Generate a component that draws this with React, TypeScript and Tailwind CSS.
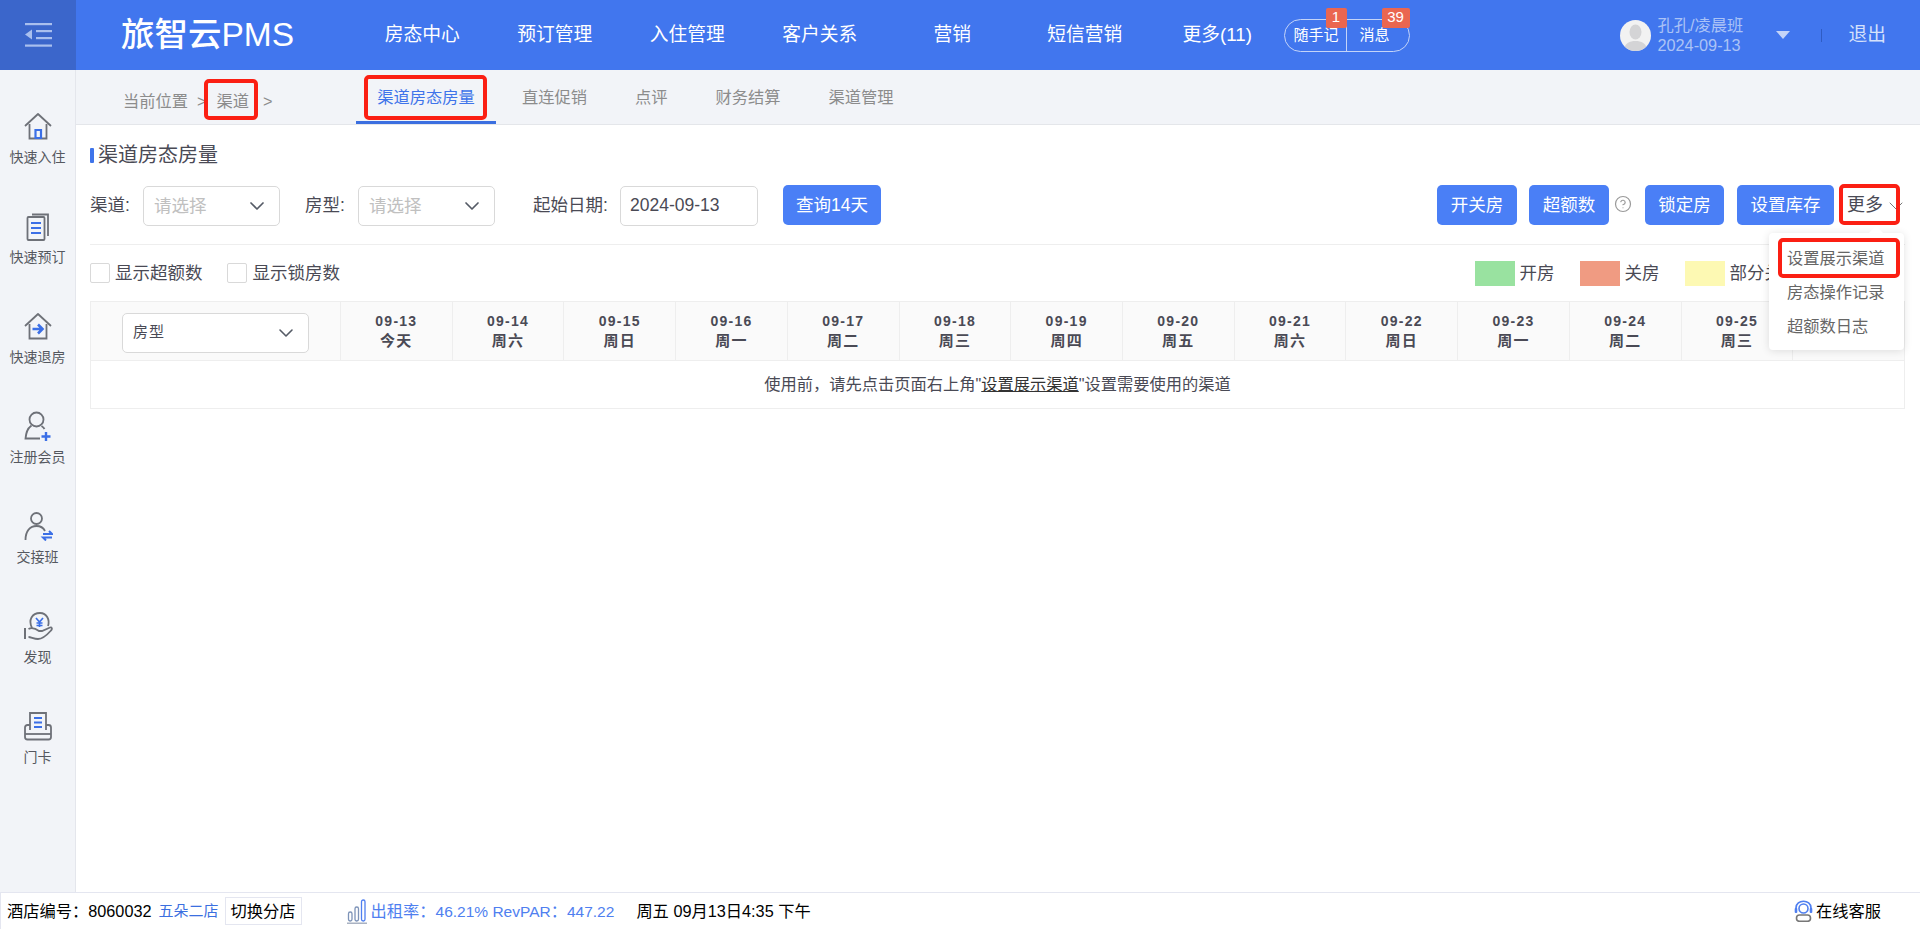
import {ChevronDown, CircleHelp} from "lucide-react";

const navItems = ["房态中心", "预订管理", "入住管理", "客户关系", "营销", "短信营销", "更多(11)"];
const dates = [
    ["09-13", "今天"], ["09-14", "周六"], ["09-15", "周日"], ["09-16", "周一"], ["09-17", "周二"],
    ["09-18", "周三"], ["09-19", "周四"], ["09-20", "周五"], ["09-21", "周六"], ["09-22", "周日"],
    ["09-23", "周一"], ["09-24", "周二"], ["09-25", "周三"],
];

const GRAY = "#6e7178";
const BLUE = "#3b6fe6";

const IconCheckin = () => (
    <svg width="30" height="30" viewBox="0 0 30 30" fill="none" strokeWidth="1.8">
        <path d="M2 15 L15 3 L28 15" stroke={GRAY} strokeLinejoin="round"/>
        <path d="M6.5 13 V27.5 H23.5 V13" stroke={GRAY}/>
        <path d="M12.5 27 V19 H18 V27 Z" stroke={BLUE} strokeWidth="2.2"/>
    </svg>
);
const IconBook = () => (
    <svg width="30" height="30" viewBox="0 0 30 30" fill="none" strokeWidth="1.8">
        <rect x="4.5" y="6" width="17" height="23" rx="1" stroke={GRAY}/>
        <path d="M9 3.5 H25 V25" stroke={GRAY}/>
        <path d="M8 12 H18 M8 17 H18 M8 22 H18" stroke={BLUE} strokeWidth="2"/>
    </svg>
);
const IconCheckout = () => (
    <svg width="30" height="30" viewBox="0 0 30 30" fill="none" strokeWidth="1.8">
        <path d="M2 15 L15 3 L28 15" stroke={GRAY} strokeLinejoin="round"/>
        <path d="M6.5 13 V27.5 H23.5 V13" stroke={GRAY}/>
        <path d="M9.5 18 H19 M15 13.5 L19.5 18 L15 22.5" stroke={BLUE} strokeWidth="2.6"/>
    </svg>
);
const IconMember = () => (
    <svg width="30" height="30" viewBox="0 0 30 30" fill="none" strokeWidth="1.8">
        <circle cx="13.5" cy="8.5" r="7" stroke={GRAY}/>
        <path d="M8.5 14.5 C3.5 18 3 23 2.5 27.5 H17" stroke={GRAY}/>
        <path d="M18.5 15 C20 16 21 17 21.5 18" stroke={GRAY}/>
        <path d="M23 21 V30 M18.5 25.5 H27.5" stroke={BLUE} strokeWidth="2.4"/>
    </svg>
);
const IconShift = () => (
    <svg width="30" height="30" viewBox="0 0 30 30" fill="none" strokeWidth="1.8">
        <circle cx="13.5" cy="7.5" r="5.5" stroke={GRAY}/>
        <path d="M2.5 29 C2.5 20 7 15 13.5 15 C17.5 15 20.5 17 22 20" stroke={GRAY}/>
        <path d="M20 23 H29 L26 20 M29 26.5 H20 L23 29.5" stroke={BLUE} strokeWidth="2"/>
    </svg>
);
const IconFind = () => (
    <svg width="30" height="30" viewBox="0 0 30 30" fill="none" strokeWidth="1.8">
        <path d="M9 17 C5 9 9 2 17 2 C24 2 27 9 25 15" stroke={GRAY}/>
        <path d="M13 7 L16.5 11 L20 7 M16.5 11 V16 M13.5 12 H19.5 M13.5 14.5 H19.5" stroke={BLUE} strokeWidth="1.7"/>
        <path d="M2 17 V28" stroke={GRAY} strokeWidth="2"/>
        <path d="M5.5 18 C9 16 12 17 16 20 H19 L27 16.5 C29 16 29.5 18 28 19.5 C24 24 20 28 15 28 C11 28 8 26 5.5 26" stroke={GRAY}/>
    </svg>
);
const IconCard = () => (
    <svg width="30" height="30" viewBox="0 0 30 30" fill="none" strokeWidth="1.8">
        <path d="M7 19 V2 H23 V19" stroke={GRAY}/>
        <path d="M11 7 H19 M11 11.5 H19 M11 16 H19" stroke={BLUE} strokeWidth="2"/>
        <path d="M7 14 H4.5 C3 14 2 15 2 16.5 V26 C2 27.5 3 28.5 4.5 28.5 H25.5 C27 28.5 28 27.5 28 26 V16.5 C28 15 27 14 25.5 14 H23" stroke={GRAY}/>
        <path d="M2 23 H28" stroke={GRAY}/>
    </svg>
);

const sideItems = [
    {label: "快速入住", icon: <IconCheckin/>},
    {label: "快速预订", icon: <IconBook/>},
    {label: "快速退房", icon: <IconCheckout/>},
    {label: "注册会员", icon: <IconMember/>},
    {label: "交接班", icon: <IconShift/>},
    {label: "发现", icon: <IconFind/>},
    {label: "门卡", icon: <IconCard/>},
];

const SelectBox = ({text}: {text: string}) => (
    <div className="mt-[1px] flex h-[40px] w-[137px] items-center justify-between rounded-[5px] border border-[#d9d9d9] bg-white pl-[10px] pr-[10px]">
        <span className="text-[17.5px] text-[#c0c0c0]">{text}</span>
        <ChevronDown size={24} strokeWidth={1.7} color="#555b66"/>
    </div>
);

const BlueButton = ({text, width, className}: {text: string; width: string; className?: string}) => (
    <button className={`flex h-[40px] items-center justify-center rounded-[5px] bg-[#4a7ff6] text-[17.5px] text-white ${width} ${className ?? ""}`}>
        {text}
    </button>
);

const App = () => {
    return (
        <div className="relative flex h-screen flex-col overflow-hidden bg-white text-[#4a4a55] [font-family:'Liberation_Sans','Noto_Sans_CJK_SC',sans-serif]">
            {/* top bar */}
            <div className="flex h-[70px] shrink-0 items-center bg-[#4176ee] text-white">
                <div className="flex h-full w-[76px] items-center justify-center bg-[#3b66cb]">
                    <svg width="27" height="24" viewBox="0 0 27 24" fill="#a9bfee">
                        <rect x="0" y="0" width="27" height="2.2"/>
                        <rect x="11" y="7" width="16" height="2.2"/>
                        <rect x="11" y="14" width="16" height="2.2"/>
                        <rect x="0" y="21.5" width="27" height="2.2"/>
                        <path d="M0 11.5 L7 6.5 V16.5 Z"/>
                    </svg>
                </div>
                <div className="w-[280px] pl-[45px] text-[33.5px] font-medium leading-none">旅智云PMS</div>
                <div className="flex">
                    {navItems.map((item) => (
                        <div key={item} className="w-[132.5px] text-center text-[18.75px]">{item}</div>
                    ))}
                </div>
                <div className="relative flex h-[33px] w-[126px] items-center rounded-full border border-[#c4d4f8] text-[15px]">
                    <div className="flex h-full w-[62px] items-center justify-center border-r border-[#c4d4f8] pl-[2px]">随手记</div>
                    <div className="flex-1 pr-[6px] text-center">消息</div>
                    <span className="absolute left-[41px] top-[-12px] flex h-[20px] w-[21px] items-center justify-center rounded-[2px] bg-[#ea6650] text-[15px]">1</span>
                    <span className="absolute left-[97px] top-[-12px] flex h-[20px] w-[28px] items-center justify-center rounded-[2px] bg-[#ea6650] text-[15px]">39</span>
                </div>
                <div className="ml-[210px] flex h-[31px] w-[31px] items-center justify-center overflow-hidden rounded-full bg-[#f2f2f2]">
                    <svg width="31" height="31" viewBox="0 0 31 31" fill="#d4d4d6">
                        <ellipse cx="15.5" cy="12" rx="6" ry="7.5"/>
                        <path d="M4 31 C4 23 10 21 15.5 21 C21 21 27 23 27 31 Z"/>
                    </svg>
                </div>
                <div className="ml-[7px] w-[118px] text-[16.25px] leading-[20px] text-[#abc3f6]">
                    <div>孔孔/凌晨班</div>
                    <div>2024-09-13</div>
                </div>
                <svg width="14" height="8" viewBox="0 0 14 8" fill="#c4d4f8"><path d="M0 0 H14 L7 8 Z"/></svg>
                <div className="ml-[31px] h-[13px] w-px bg-[#2f5cc4]"></div>
                <div className="ml-[27px] text-[18.75px] text-[#d5e1fb]">退出</div>
            </div>

            <div className="flex min-h-0 flex-1">
                {/* left rail */}
                <div className="w-[76px] shrink-0 border-r border-[#e4e6ec] bg-[#f2f4f8] pt-[41px]">
                    {sideItems.map((item) => (
                        <div key={item.label} className="flex h-[100px] flex-col items-center">
                            <div className="flex h-[30px] items-center justify-center">{item.icon}</div>
                            <div className="mt-[6px] text-[14px] leading-[20px] text-[#55585f]">{item.label}</div>
                        </div>
                    ))}
                </div>

                <div className="min-w-0 flex-1">
                    {/* sub nav */}
                    <div className="flex h-[55px] border-b border-[#e4e6ea] bg-[#f2f4f8]">
                        <div className="flex w-[280px] pl-[47px] pt-[19px] text-[16.25px] leading-[24px] text-[#8c8c8c]">
                            <span>当前位置</span>
                            <span className="ml-[9px]">&gt;</span>
                            <span className="ml-[10px]">渠道</span>
                            <span className="ml-[14px]">&gt;</span>
                        </div>
                        <div className="h-[54px] w-[140px] border-b-[3px] border-[#3b6fe0] pt-[15px] text-center text-[16.25px] leading-[24px] text-[#3f74ea]">渠道房态房量</div>
                        <div className="ml-[26px] flex gap-[48px] pt-[15px] text-[16.25px] leading-[24px] text-[#8c8c8c]">
                            <span>直连促销</span>
                            <span>点评</span>
                            <span>财务结算</span>
                            <span>渠道管理</span>
                        </div>
                    </div>

                    <div className="pl-[14px] pr-[15px]">
                        <div className="mt-[16px] flex h-[28px] items-center">
                            <div className="h-[15px] w-[4px] rounded-[1px] bg-[#3f74ea]"></div>
                            <div className="ml-[4px] text-[20px] leading-[28px]">渠道房态房量</div>
                        </div>

                        {/* filters */}
                        <div className="mt-[16px] flex h-[41px] items-start text-[17.5px] leading-[41px]">
                            <span className="w-[53px]">渠道:</span>
                            <SelectBox text="请选择"/>
                            <span className="ml-[25px] w-[53px]">房型:</span>
                            <SelectBox text="请选择"/>
                            <span className="ml-[38px] w-[87px]">起始日期:</span>
                            <div className="mt-[1px] flex h-[40px] w-[138px] items-center rounded-[5px] border border-[#d9d9d9] pl-[9px] leading-none">2024-09-13</div>
                            <BlueButton text="查询14天" width="w-[98px]" className="ml-[25px]"/>
                            <div className="ml-auto flex items-start">
                                <BlueButton text="开关房" width="w-[80px]"/>
                                <BlueButton text="超额数" width="w-[80px]" className="ml-[12px]"/>
                                <CircleHelp size={18} strokeWidth={1.6} color="#9a9a9a" className="ml-[5px] mt-[10px]"/>
                                <BlueButton text="锁定房" width="w-[79px]" className="ml-[13px]"/>
                                <BlueButton text="设置库存" width="w-[97px]" className="ml-[13px]"/>
                                <span className="ml-[13px] text-[18px]">更多</span>
                                <ChevronDown size={24} strokeWidth={1} color="#777" className="ml-[1px] mr-[-3px] mt-[9px]"/>
                            </div>
                        </div>
                        <div className="mt-[18px] border-b border-[#eeeeee]"></div>

                        {/* options and legend */}
                        <div className="flex h-[56px] items-center text-[17.5px]">
                            <div className="h-[20px] w-[20px] rounded-[2px] border border-[#d9d9d9]"></div>
                            <span className="ml-[5px]">显示超额数</span>
                            <div className="ml-[24px] h-[20px] w-[20px] rounded-[2px] border border-[#d9d9d9]"></div>
                            <span className="ml-[6px]">显示锁房数</span>
                            <div className="ml-auto flex items-center pr-[123px]">
                                <div className="h-[25px] w-[40px] bg-[#99e2a0]"></div>
                                <span className="ml-[5px]">开房</span>
                                <div className="ml-[25px] h-[25px] w-[40px] bg-[#f09b82]"></div>
                                <span className="ml-[5px]">关房</span>
                                <div className="ml-[25px] h-[25px] w-[40px] bg-[#fdf9b3]"></div>
                                <span className="ml-[5px]">部分关</span>
                            </div>
                        </div>

                        {/* calendar table */}
                        <div className="border border-[#eeeeee]">
                            <div className="grid h-[59px] grid-cols-[249px_repeat(14,1fr)] border-b border-[#eeeeee] bg-[#fafafa]">
                                <div className="flex items-center pl-[31px] pt-[3px]">
                                    <div className="flex h-[40px] w-[187px] items-center justify-between rounded-[5px] border border-[#d9d9d9] bg-white pl-[10px] pr-[10px] text-[15px] tracking-[1px]">
                                        <span>房型</span>
                                        <ChevronDown size={24} strokeWidth={1.6} color="#555b66"/>
                                    </div>
                                </div>
                                {dates.map(([d, w]) => (
                                    <div key={d} className="border-l border-[#eeeeee] pt-[9px] text-center font-bold leading-[20px] tracking-[1.25px]">
                                        <div className="text-[14px]">{d}</div>
                                        <div className="text-[15px]">{w}</div>
                                    </div>
                                ))}
                                <div className="border-l border-[#eeeeee]"></div>
                            </div>
                            <div className="flex h-[47px] items-center justify-center text-[16.25px]">
                                使用前，请先点击页面右上角"<span className="text-[#333] underline">设置展示渠道</span>"设置需要使用的渠道
                            </div>
                        </div>
                    </div>
                </div>
            </div>

            {/* status bar */}
            <div className="flex h-[37px] shrink-0 items-center border-l border-t border-[#e4e6f0] pl-[6px] text-[16.25px] text-black">
                <span>酒店编号：8060032</span>
                <span className="ml-[7px] text-[15px] text-[#3b6fe0]">五朵二店</span>
                <span className="ml-[6px] flex h-[28px] w-[77px] items-center justify-center border border-[#e4e6f0]">切换分店</span>
                <svg className="ml-[45px]" width="20" height="26" viewBox="0 0 20 26" fill="none" stroke="#7d93b8" strokeWidth="1.3">
                    <rect x="1.5" y="14" width="3.5" height="9" rx="1.7"/>
                    <rect x="8" y="9" width="3.5" height="14" rx="1.7"/>
                    <rect x="14.5" y="2" width="3.5" height="21" rx="1.7" stroke="#4f7ff0"/>
                    <path d="M0 25.2 H20" stroke="#9aa5b8"/>
                </svg>
                <span className="ml-[4px] text-[#4f7ff0]">
                    出租率：<span className="text-[15.5px]">46.21% RevPAR</span>：<span className="text-[15.5px]">447.22</span>
                </span>
                <span className="ml-[22px]">周五 09月13日4:35 下午</span>
                <div className="ml-auto flex items-center pr-[39px]">
                    <svg width="19" height="22" viewBox="0 0 19 22" fill="none">
                        <path d="M2 11 V8 C2 -1 17 -1 17 8 V11" stroke="#4f7ff0" strokeWidth="1.7"/>
                        <circle cx="9.5" cy="8.5" r="4.5" stroke="#4f7ff0" strokeWidth="1.6"/>
                        <rect x="0.7" y="8" width="2.6" height="5" rx="1" fill="#4f7ff0"/>
                        <rect x="15.7" y="8" width="2.6" height="5" rx="1" fill="#4f7ff0"/>
                        <rect x="2.5" y="15" width="14" height="6.3" rx="3" stroke="#777" strokeWidth="1.6"/>
                    </svg>
                    <span className="ml-[3px]">在线客服</span>
                </div>
            </div>

            {/* dropdown menu */}
            <div className="absolute left-[1769px] top-[233px] h-[117px] w-[135px] rounded-[4px] bg-white pl-[18px] pt-[8px] text-[16.25px] leading-[34px] text-[#666] shadow-[0_1px_8px_rgba(0,0,0,0.12)]">
                <div className="absolute left-[102px] top-[-5px] h-[10px] w-[10px] rotate-45 bg-white"></div>
                <div>设置展示渠道</div>
                <div>房态操作记录</div>
                <div>超额数日志</div>
            </div>

            {/* red annotation boxes */}
            <div className="absolute left-[204px] top-[79px] h-[41px] w-[54px] rounded-[5px] border-[4px] border-[#fb1f13]"></div>
            <div className="absolute left-[364px] top-[75px] h-[45px] w-[123px] rounded-[5px] border-[4px] border-[#fb1f13]"></div>
            <div className="absolute left-[1839px] top-[184px] h-[41px] w-[61px] rounded-[5px] border-[4px] border-[#fb1f13]"></div>
            <div className="absolute left-[1778px] top-[238px] h-[40px] w-[122px] rounded-[5px] border-[4px] border-[#fb1f13]"></div>
        </div>
    );
};

export default App;
